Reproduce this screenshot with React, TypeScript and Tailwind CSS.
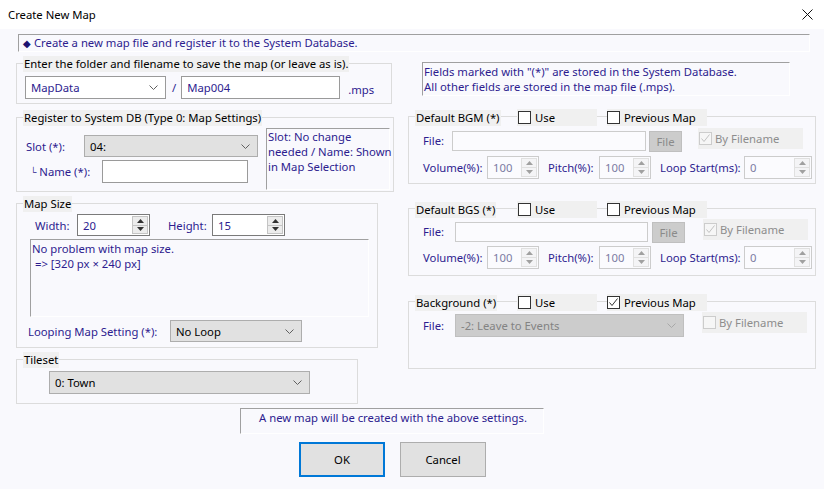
import type { ReactNode } from 'react'

const purple = 'text-[#2d1c8f]'

function Chevron({ muted }: { muted?: boolean }) {
  return (
    <svg width="9" height="5" viewBox="0 0 9 5" className="ml-auto mr-[7px]">
      <polyline points="0.5,0.5 4.5,4.5 8.5,0.5" fill="none" stroke={muted ? '#a8a8a8' : '#606060'} strokeWidth="1" />
    </svg>
  )
}

function Combo({ className, text, variant }: { className: string; text: string; variant: 'white' | 'gray' | 'off' }) {
  const skin =
    variant === 'white'
      ? `bg-white border-[#9a9a9a] ${purple}`
      : variant === 'gray'
        ? 'bg-[#e1e1e1] border-[#adadad] text-black'
        : 'bg-[#cccccc] border-[#bfbfbf] text-[#838383]'
  return (
    <div className={`flex items-center border pl-[5px] ${skin} ${className}`}>
      <span className="leading-[15px]">{text}</span>
      <Chevron muted={variant === 'off'} />
    </div>
  )
}

function TextBox({ className, text, off }: { className: string; text?: string; off?: boolean }) {
  return (
    <div className={`flex items-center border pl-[5px] ${off ? 'border-[#cccccc] bg-[#fbfbfe]' : `border-[#9a9a9a] bg-white ${purple}`} ${className}`}>
      {text}
    </div>
  )
}

function Arrow({ up, color }: { up?: boolean; color: string }) {
  return (
    <svg width="7" height="4" viewBox="0 0 7 4">
      <polygon points={up ? '0,4 3.5,0 7,4' : '0,0 3.5,4 7,0'} fill={color} />
    </svg>
  )
}

function Spin({ className, value, on }: { className: string; value: string; on?: boolean }) {
  return (
    <div className={`flex border ${on ? `border-[#7a7a7a] bg-white ${purple}` : 'border-[#cccccc] bg-[#fbfbfe] text-[#7b7ba3]'} ${className}`}>
      <span className="pl-[5px] self-center">{value}</span>
      <div className={`ml-auto my-[1px] mr-[1px] w-[16px] flex flex-col border ${on ? 'border-[#c4c4c4] bg-[#ececec]' : 'border-[#e0e0e0] bg-[#f4f4f6]'}`}>
        <div className={`flex-1 flex items-center justify-center border-b ${on ? 'border-[#c4c4c4]' : 'border-[#e0e0e0]'}`}>
          <Arrow up color={on ? '#303030' : '#a0a0a0'} />
        </div>
        <div className="flex-1 flex items-center justify-center">
          <Arrow color={on ? '#303030' : '#a0a0a0'} />
        </div>
      </div>
    </div>
  )
}

function Check({ checked, off }: { checked?: boolean; off?: boolean }) {
  return (
    <span className={`w-[13px] h-[13px] shrink-0 border flex items-center justify-center ${off ? 'border-[#cccccc] bg-[#f6f6f6]' : 'border-[#333333] bg-white'}`}>
      {checked && (
        <svg width="11" height="11" viewBox="0 0 11 11">
          <polyline points="1.5,5.5 4,8.5 9.5,1.5" fill="none" stroke={off ? '#c2c2c2' : '#333333'} strokeWidth="1" />
        </svg>
      )}
    </span>
  )
}

function Group({ className, legend, children }: { className: string; legend: ReactNode; children: ReactNode }) {
  return (
    <div className={`relative border border-[#dcdcdc] ${className}`}>
      <div className="absolute left-[6px] -top-[8px] flex items-center">{legend}</div>
      {children}
    </div>
  )
}

function Legend({ children }: { children: ReactNode }) {
  return <span className="bg-[#f0f0f0] px-[1px] h-[16px] leading-[16px] text-black">{children}</span>
}

function AudioLegend({ title, prev }: { title: string; prev?: boolean }) {
  return (
    <>
      <span className="w-[102px] flex">
        <Legend>{title}</Legend>
      </span>
      <span className="w-[80px] h-[17px] bg-[#f0f0f0] flex items-center gap-[4px] pl-[1px] text-black">
        <Check />
        Use
      </span>
      <span className="ml-[10px] w-[100px] h-[17px] bg-[#f0f0f0] flex items-center gap-[4px] text-black">
        <Check checked={prev} />
        Previous Map
      </span>
    </>
  )
}

function ByFilename({ className, checked }: { className: string; checked?: boolean }) {
  return (
    <div className={`w-[105px] h-[21px] bg-[#f0f0f0] flex items-center gap-[3px] pl-[1px] text-[#8d8d8d] ${className}`}>
      <Check off checked={checked} />
      By Filename
    </div>
  )
}

function SpinRow({ className }: { className: string }) {
  return (
    <div className={`flex items-center pl-[14px] ${purple} ${className}`}>
      <span className="w-[64px]">Volume(%):</span>
      <Spin className="w-[52px] h-[23px]" value="100" />
      <span className="ml-[9px] w-[51px]">Pitch(%):</span>
      <Spin className="w-[52px] h-[23px]" value="100" />
      <span className="ml-[9px] w-[84px]">Loop Start(ms):</span>
      <Spin className="w-[68px] h-[23px]" value="0" />
    </div>
  )
}

function Sunken({ className, children }: { className: string; children: ReactNode }) {
  return (
    <div className={`border-t border-l border-[#a0a0a0] border-r border-b border-r-white border-b-white ${purple} ${className}`}>
      {children}
    </div>
  )
}

export default function App() {
  return (
    <div className="w-[824px] h-[489px] overflow-hidden whitespace-nowrap bg-[#f9f9fd] font-['Segoe_UI','Noto_Sans',sans-serif] text-[11.3px] leading-[15px]">
      <div className="h-[29px] bg-white flex items-center justify-between pl-[8px] pr-[11px] text-black">
        <span>Create New Map</span>
        <svg width="11" height="11" viewBox="0 0 11 11">
          <path d="M0.5 0.5 L10.5 10.5 M10.5 0.5 L0.5 10.5" stroke="#111" strokeWidth="1" />
        </svg>
      </div>

      <Sunken className="mt-[5px] ml-[18px] w-[792px] h-[18px] pl-[4px] leading-[16px]">
        <span className="text-[10px] text-[#1c1270]">◆</span> Create a new map file and register it to the System Database.
      </Sunken>

      <div className="flex items-start">
        <div className="ml-[16px] w-[378px] pt-[11px] flex flex-col">
          <Group className="w-[376px] h-[41px]" legend={<Legend>Enter the folder and filename to save the map (or leave as is).</Legend>}>
            <div className="flex items-center pt-[12px] pl-[8px]">
              <Combo className="w-[141px] h-[23px]" text="MapData" variant="white" />
              <span className={`ml-[6px] ${purple}`}>/</span>
              <TextBox className="ml-[5px] w-[159px] h-[23px]" text="Map004" />
              <span className={`ml-[8px] mt-[4px] ${purple}`}>.mps</span>
            </div>
          </Group>

          <Group className="mt-[13px] w-[378px] h-[75px]" legend={<Legend>Register to System DB (Type 0: Map Settings)</Legend>}>
            <div className="flex">
              <div className={`pl-[9px] pt-[17px] flex flex-col ${purple}`}>
                <div className="flex items-center">
                  <span className="w-[58px]">Slot (*):</span>
                  <Combo className="w-[174px] h-[22px]" text="04:" variant="gray" />
                </div>
                <div className="flex items-center mt-[3px]">
                  <span className="w-[76px] pl-[4px]">
                    <span className="text-[9px] align-top">└</span> Name (*):
                  </span>
                  <TextBox className="w-[146px] h-[23px]" />
                </div>
              </div>
              <Sunken className="ml-auto mr-[3px] mt-[10px] w-[124px] h-[62px] pl-[1px]">
                Slot: No change
                <br />
                needed / Name: Shown
                <br />
                in Map Selection
              </Sunken>
            </div>
          </Group>

          <Group className="mt-[11px] w-[362px] h-[145px]" legend={<Legend>Map Size</Legend>}>
            <div className={`flex items-center pt-[10px] pl-[18px] ${purple}`}>
              <span className="w-[42px]">Width:</span>
              <Spin className="w-[73px] h-[22px]" value="20" on />
              <span className="ml-[18px] w-[44px]">Height:</span>
              <Spin className="w-[73px] h-[22px]" value="15" on />
            </div>
            <Sunken className="mt-[3px] ml-[13px] w-[339px] h-[78px] pt-[1px] pl-[1px]">
              No problem with map size.
              <br />
              &nbsp;=&gt; [320 px × 240 px]
            </Sunken>
            <div className={`flex items-center mt-[3px] pl-[11px] ${purple}`}>
              <span className="w-[142px]">Looping Map Setting (*):</span>
              <Combo className="w-[132px] h-[22px]" text="No Loop" variant="gray" />
            </div>
          </Group>

          <Group className="mt-[11px] w-[342px] h-[45px]" legend={<Legend>Tileset</Legend>}>
            <div className="pt-[11px] pl-[32px]">
              <Combo className="w-[261px] h-[23px]" text="0: Town" variant="gray" />
            </div>
          </Group>
        </div>

        <div className="ml-[14px] w-[408px] pt-[10px] flex flex-col">
          <Sunken className="ml-[14px] w-[368px] h-[34px] pt-[1px] pl-[1px]">
            Fields marked with "(*)" are stored in the System Database.
            <br />
            All other fields are stored in the map file (.mps).
          </Sunken>

          <Group className="mt-[20px] w-[408px] h-[68px]" legend={<AudioLegend title="Default BGM (*)" />}>
            <div className={`flex items-start pt-[14px] pl-[14px] ${purple}`}>
              <span className="w-[29px] leading-[20px]">File:</span>
              <TextBox className="w-[194px] h-[20px]" off />
              <div className="ml-[3px] w-[33px] h-[21px] bg-[#cccccc] border border-[#bfbfbf] text-[#8a8a8a] flex items-center justify-center">File</div>
              <ByFilename className="ml-[16px] -mt-[3px]" checked />
            </div>
            <SpinRow className="mt-[4px]" />
          </Group>

          <Group className="mt-[24px] w-[408px] h-[68px]" legend={<AudioLegend title="Default BGS (*)" />}>
            <div className={`flex items-start pt-[13px] pl-[14px] ${purple}`}>
              <span className="w-[32px] leading-[20px]">File:</span>
              <TextBox className="w-[193px] h-[20px]" off />
              <div className="ml-[4px] w-[33px] h-[21px] bg-[#cccccc] border border-[#bfbfbf] text-[#8a8a8a] flex items-center justify-center">File</div>
              <ByFilename className="ml-[18px] -mt-[3px]" checked />
            </div>
            <SpinRow className="mt-[3px]" />
          </Group>

          <Group className="mt-[25px] w-[408px] h-[68px]" legend={<AudioLegend title="Background (*)" prev />}>
            <div className={`flex items-start pt-[12px] pl-[14px] ${purple}`}>
              <span className="w-[32px] leading-[23px]">File:</span>
              <Combo className="w-[229px] h-[23px]" text="-2: Leave to Events" variant="off" />
              <ByFilename className="ml-[18px] -mt-[2px]" />
            </div>
          </Group>
        </div>
      </div>

      <Sunken className="mt-[4px] ml-[240px] w-[304px] h-[26px] pl-[18px] pt-[1px]">
        A new map will be created with the above settings.
      </Sunken>

      <div className="flex mt-[8px] ml-[299px] gap-[15px] text-black">
        <button className="w-[86px] h-[35px] bg-[#e1e1e1] border-2 border-[#0078d7]">OK</button>
        <button className="w-[86px] h-[35px] bg-[#e1e1e1] border border-[#adadad]">Cancel</button>
      </div>
    </div>
  )
}
